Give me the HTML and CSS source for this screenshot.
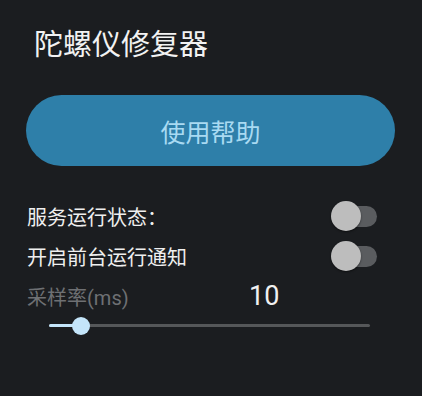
FILE: index.html
```html
<!DOCTYPE html>
<html lang="zh-CN">
<head>
<meta charset="utf-8">
<link rel="stylesheet" href="styles.css">
</head>
<body>
<div class="page">
  <div class="title">陀螺仪修复器</div>
  <div class="btn">使用帮助</div>
  <div class="row">
    <span class="label">服务运行状态：</span>
    <span class="switch"><span class="track"></span><span class="thumb"></span></span>
  </div>
  <div class="row">
    <span class="label">开启前台运行通知</span>
    <span class="switch"><span class="track"></span><span class="thumb"></span></span>
  </div>
  <div class="rate">
    <span class="rate-label">采样率(ms)</span>
    <span class="rate-value">10</span>
  </div>
  <div class="slider">
    <div class="slider-track">
      <div class="slider-active" style="width:10%"></div>
    </div>
    <div class="slider-thumb" style="left:10%"></div>
  </div>
</div>
</body>
</html>
```

FILE: styles.css
```css
html, body {
  margin: 0;
  padding: 0;
  background: #1b1d20;
}
body {
  font-family: Roboto, "Noto Sans CJK SC", sans-serif;
  color: #eeeeee;
  width: 422px;
  height: 396px;
  overflow: hidden;
}
.page {
  padding: 25px 27px 0 26px;
}
.title {
  height: 40px;
  line-height: 40px;
  font-size: 29px;
  margin-left: 8px;
  color: #f2f2f2;
}
.btn {
  margin-top: 30px;
  height: 71px;
  border-radius: 36px;
  background: #2e7fa9;
  color: #a9daf2;
  font-size: 25px;
  display: flex;
  align-items: center;
  justify-content: center;
}
.row {
  display: flex;
  align-items: center;
  justify-content: space-between;
  height: 40px;
  padding-left: 1px;
}
.btn + .row {
  margin-top: 30px;
}
.label {
  font-size: 20px;
  color: #efefef;
}
.switch {
  position: relative;
  width: 46px;
  height: 30px;
  margin-right: 18px;
}
.track {
  position: absolute;
  right: 0;
  top: 5px;
  width: 44px;
  height: 21px;
  border-radius: 11px;
  background: #5a5c5f;
}
.thumb {
  position: absolute;
  left: 0;
  top: 0;
  width: 30px;
  height: 30px;
  border-radius: 50%;
  background: #bdbdbd;
  box-shadow: 0 1px 2px rgba(0, 0, 0, 0.5);
}
.rate {
  display: flex;
  align-items: center;
  height: 40px;
  padding-left: 1px;
}
.rate-label {
  width: 222px;
  font-size: 20px;
  color: #6e7073;
}
.rate-value {
  font-size: 27px;
  color: #f0f0f0;
}
.slider {
  position: relative;
  margin-left: 23px;
  width: 321px;
  height: 20px;
}
.slider-track {
  position: absolute;
  left: 0;
  right: 0;
  top: 8px;
  height: 3px;
  background: #555759;
  border-radius: 2px;
}
.slider-active {
  height: 100%;
  background: #c4e5fa;
  border-radius: 2px;
}
.slider-thumb {
  position: absolute;
  top: 1px;
  width: 18px;
  height: 18px;
  margin-left: -9px;
  border-radius: 50%;
  background: #c4e5fa;
}
```
